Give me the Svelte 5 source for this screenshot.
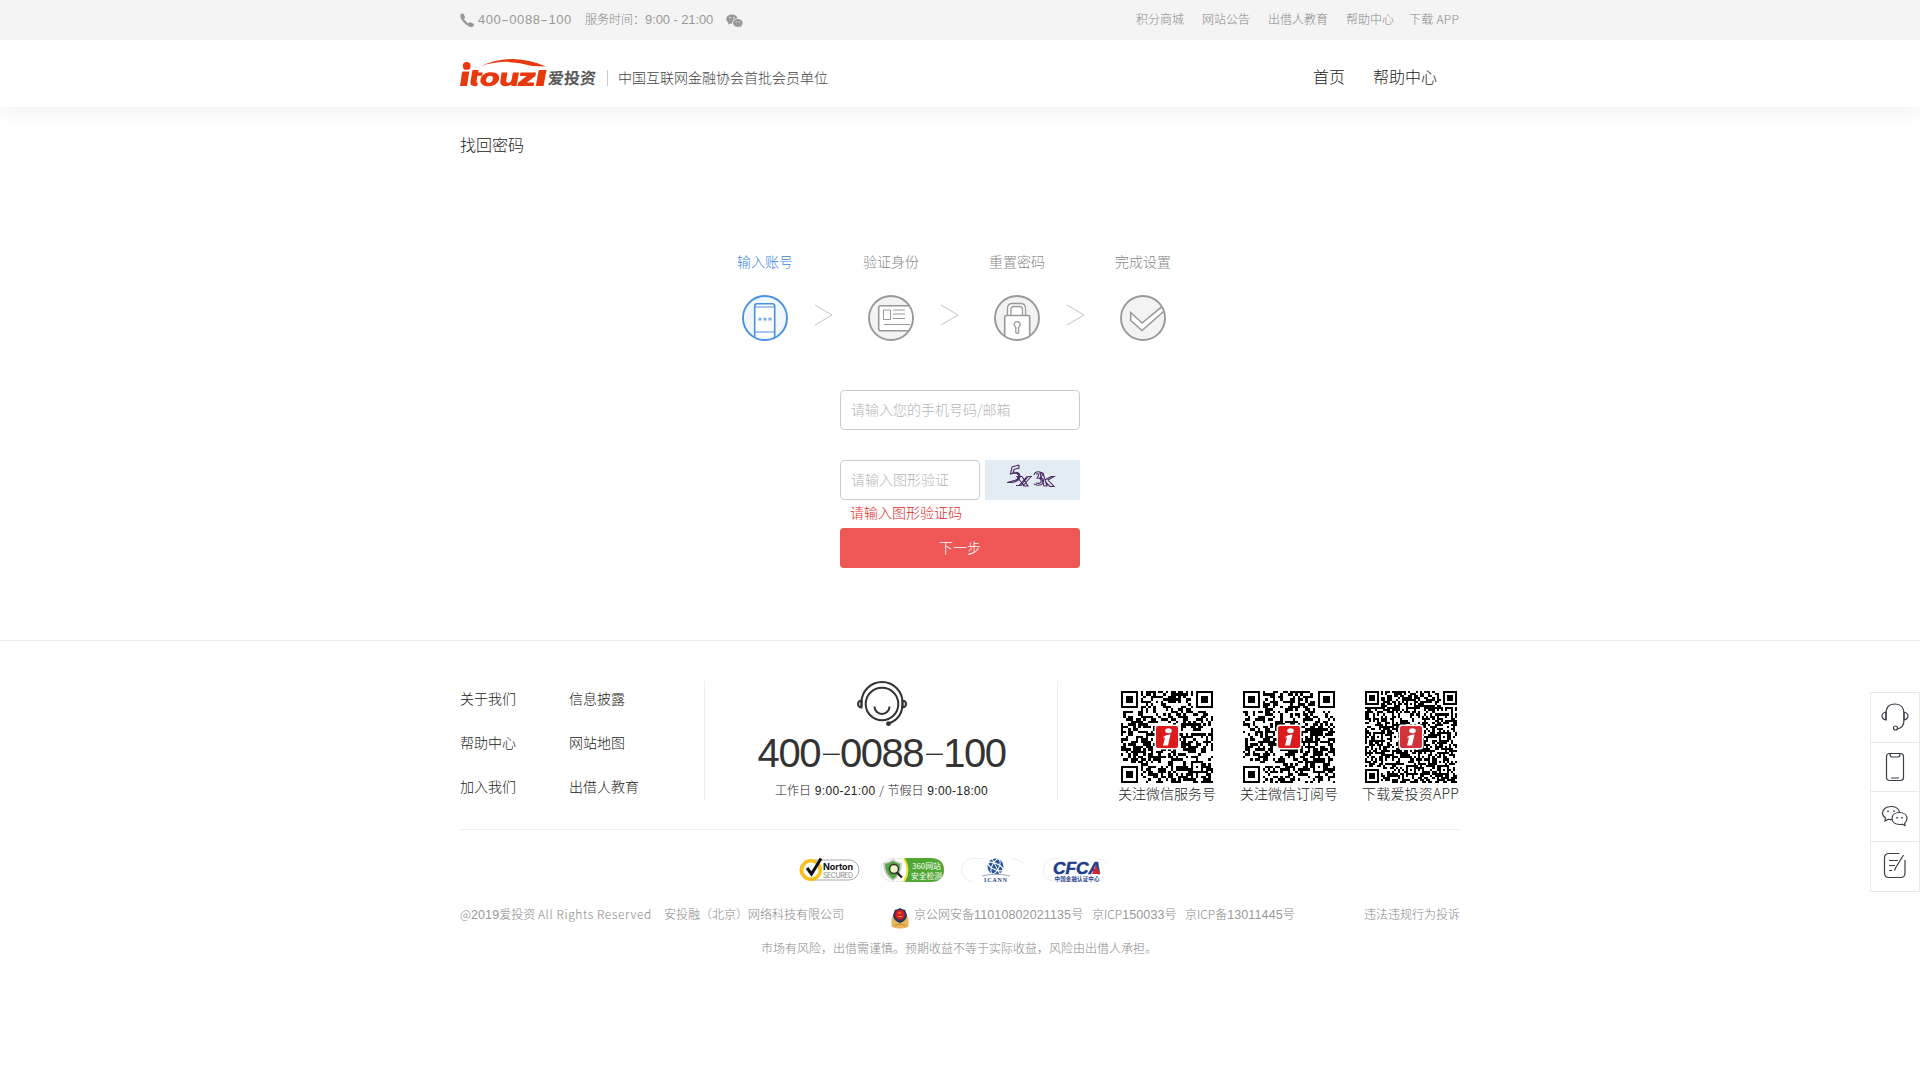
<script>
  const topLinks = ['积分商城', '网站公告', '出借人教育', '帮助中心', '下载 APP'];
  const steps = [
    { label: '输入账号', icon: 'phone' },
    { label: '验证身份', icon: 'card' },
    { label: '重置密码', icon: 'lock' },
    { label: '完成设置', icon: 'check' },
  ];
  const links = ['关于我们', '信息披露', '帮助中心', '网站地图', '加入我们', '出借人教育'];

  // Builds the dark modules of a QR-style symbol as one path.
  function qr(n, seed, align) {
    let s = seed;
    const rand = () => {
      s = (s * 1664525 + 1013904223) % 4294967296;
      return s / 4294967296;
    };
    const grid = Array.from({ length: n }, () => Array.from({ length: n }, () => rand() < 0.52));
    const ring = (cx, cy, r, pad) => {
      for (let y = -r - pad; y <= r + pad; y++)
        for (let x = -r - pad; x <= r + pad; x++) {
          const yy = cy + y;
          const xx = cx + x;
          if (yy < 0 || xx < 0 || yy >= n || xx >= n) continue;
          const d = Math.max(Math.abs(x), Math.abs(y));
          grid[yy][xx] = r === 3 ? d === 3 || d <= 1 : d !== 1;
        }
    };
    for (const [x, y] of align) ring(x, y, 2, 0);
    ring(3, 3, 3, 1);
    ring(n - 4, 3, 3, 1);
    ring(3, n - 4, 3, 1);
    let d = '';
    grid.forEach((row, y) => row.forEach((on, x) => {
      if (on) d += `M${x} ${y}h1v1h-1z`;
    }));
    return d;
  }
  const codes = [
    { label: '关注微信服务号', n: 37, d: qr(37, 17, [[30, 30]]) },
    { label: '关注微信订阅号', n: 37, d: qr(37, 923, [[30, 30]]) },
    { label: '下载爱投资APP', n: 45, d: qr(45, 4411, [[38, 38], [22, 6], [6, 22], [38, 22], [22, 38]]) },
  ];
</script>

<div class="page">
  <div class="topbar">
    <div class="wrap">
      <svg class="tel" width="15" height="15" viewBox="0 0 15 15"><path d="M.6 1.6Q2-.1 3.500 .8L5 4Q5.300 4.800 4 5.800Q5.200 8.800 8.300 10.600Q9.400 9 10.300 9.300L13.800 11Q14.500 12 13 13.600Q10.500 15.300 6 11.500Q-1 5.600 .6 1.600Z" fill="#999" /></svg>
      <span class="num">400<i>-</i>0088<i>-</i>100</span>
      <span class="time">服务时间：<b>9:00 - 21:00</b></span>
      <svg class="wx" width="17" height="14" viewBox="0 0 17 14"><path d="M6 .5C2.800 .5.300 2.500.300 5.100c0 1.500.8 2.700 2 3.500L1.800 10.700 4 9.500q1 .3 2.300.2C6 6.500 8.300 4.300 11.600 4.200 11 2 8.800.5 6 .5Z" fill="#999" /><path d="M11.700 5C9.200 5 7.100 6.700 7.100 8.900s2.100 4 4.600 4q1 0 1.800-.3l1.900 1-.5-1.700c1-.7 1.700-1.800 1.700-3C16.600 6.700 14.300 5 11.700 5Z" fill="#999" /><g fill="#f4f4f4"><circle cx="4" cy="3.800" r=".8" /><circle cx="7.800" cy="3.800" r=".8" /><circle cx="10.200" cy="7.900" r=".7" /><circle cx="13.300" cy="7.900" r=".7" /></g></svg>
      <nav>{#each topLinks as t}<a>{t}</a>{/each}</nav>
    </div>
  </div>

  <header>
    <div class="wrap">
      <svg class="logo" width="87" height="28" viewBox="0 0 87 28">
        <g fill="#e8380d">
          <circle cx="6.700" cy="6.900" r="3.900" />
          <path d="M20 7.500Q35 .2 53 0Q71 .5 86 7.500L72 7Q46-1.500 20 7.500Z" />
          <path d="M2.500 12.500H9.300L7 27H0L1.500 16.500Q1.700 14 2.500 12.500Z" />
          <path d="M12.500 11h6l-.4 2.500h4.700l-.8 3.300h-4.500l-1 5.500q-.2 1.600 1.500 1.500L17 27q-7.500 1-6.500-4.500Z" />
          <path fill-rule="evenodd" d="M31 13.200c6 0 9 2.800 8 7s-5 7-10.500 7-9-2.700-8-7 5-7 10.500-7Zm-.8 3.500c-2.300 0-3.500 1.500-4 3.700s.3 3.300 2.600 3.300 3.500-1.200 4-3.300-.3-3.700-2.600-3.700Z" />
          <path d="M41.500 13.500h6l-1.300 7.500q-.5 2.800 2 2.800 2.700 0 3.400-3l1.300-7.300H59L56.500 27h-5.200l.3-1.500q-8 3.500-10.800-.3-.8-1.200-.3-3.500Z" />
          <path d="M60.500 13.500H76l-.6 3.400-8.500 6.500h7.400l-.7 3.600H57.500l.6-3.300 8.500-6.800h-6.700Z" />
          <path d="M78.800 11H86.500L83.500 27h-7.700Z" />
        </g>
      </svg>
      <strong>爱投资</strong>
      <span class="slogan">中国互联网金融协会首批会员单位</span>
      <nav><a>首页</a><a>帮助中心</a></nav>
    </div>
  </header>

  <main class="wrap">
    <h1>找回密码</h1>
    <ol>
      {#each steps as step, i}
        <li class:active={i === 0}>
          <span>{step.label}</span>
          <svg width="46" height="46" viewBox="0 0 46 46" fill="none" stroke="currentColor">
            <defs><clipPath id="disc{i}"><circle cx="23" cy="23" r="22" /></clipPath></defs>
            <circle class="disc" cx="23" cy="23" r="22" stroke="none" />
            <g clip-path="url(#disc{i})">
              {#if step.icon === 'phone'}
                <rect x="12.700" y="8.700" width="20" height="40" rx="2.500" fill="#fff" stroke-width="1.600" />
                <path d="M13 12h20M13 37h20" stroke-width="1" />
                <path d="M18 22v4.400M16 23.200l4 2M20 23.200l-4 2M23 22v4.400M21 23.200l4 2M25 23.200l-4 2M28 22v4.400M26 23.200l4 2M30 23.200l-4 2" stroke-width=".6" />
              {:else if step.icon === 'card'}
                <rect x="10.700" y="10.700" width="38" height="25" rx="2" fill="#fff" stroke-width="1.600" />
                <path d="M15.500 15h7v9.500h-7ZM25 15h12M25 19h12M25 23.500h12M16 29.500h26" stroke-width="1" />
              {:else if step.icon === 'lock'}
                <path d="M13.500 21V13.500q0-5 5-5h8q5 0 5 5V21M17 21V14.500q0-3 3-3h5.500q3 0 3 3V21" fill="#fff" stroke-width="1.300" />
                <rect x="10.700" y="20.500" width="25" height="30" rx="1.500" fill="#fff" stroke-width="1.600" />
                <path d="M21.800 37.500v-5.300a3 3 0 1 1 2.800 0v5.300q-1.400 1.500-2.800 0Z" stroke-width="1.300" />
              {:else}
                <path d="M10.700 17.500v8L22 35.500 47 13.500V7.500L22 28Z" fill="#fff" stroke-width="1.600" />
              {/if}
            </g>
            <circle cx="23" cy="23" r="22" stroke-width="1.900" />
          </svg>
          {#if i < 3}<svg class="next" width="20" height="22" viewBox="0 0 20 22" fill="none" stroke="#c4c4c4"><path d="M1 1l17 10L1 21" /></svg>{/if}
        </li>
      {/each}
    </ol>
    <form>
      <input placeholder="请输入您的手机号码/邮箱" />
      <div class="row">
        <input placeholder="请输入图形验证" />
        <svg class="captcha" width="95" height="40" viewBox="0 0 95 40" fill="none" stroke="#4b2a62" stroke-width="1.100">
          <rect width="95" height="40" fill="#e4ecf3" stroke="none" />
          <path d="M34 5l-7 2-1.500 7q6-2 8 1 1 5-6 6l-5 1.500M34 5v3l-5 1.500-1 3q6-1 7 3 0 6-8 7h-5" />
          <path d="M32 16.500h5l6 9.500h-4ZM31 25.500h5l7-9h4M34 25.500l8-9M46 16.500l-8 9.500" />
          <path d="M49 15q1-4 6-3 5 2 0 6 5 0 3 5-3 4-9 1M51 14q5-1 1 4 5 0 4 4-1 2-5 1" />
          <path d="M55 13l4 13h3L58 13ZM60 20l6-3.500h3L63 20l6 6.500h-4l-5-5" />
        </svg>
      </div>
      <p>请输入图形验证码</p>
      <button type="button">下一步</button>
    </form>
  </main>

  <footer>
    <div class="wrap">
      <div class="info">
        <div class="links">{#each links as l}<a>{l}</a>{/each}</div>
        <div class="service">
          <svg width="50" height="46" viewBox="0 0 50 46" fill="none" stroke="#333" stroke-width="2"><circle cx="25" cy="23" r="16.300" /><path d="M4.500 25V21.500A20.500 20.500 0 0 1 45.500 21.500Q46 37 32 42.500M17.500 25.500a7.500 7.500 0 0 0 15 0" /><path d="M4.500 19.500Q1 20 1 23t3.500 3.500ZM45.500 19.500q3.500.5 3.500 3.500t-3.500 3.500Z" /><circle cx="31.500" cy="42.700" r="1.400" fill="#333" /></svg>
          <div class="big">400<i>-</i>0088<i>-</i>100</div>
          <p>工作日 <b>9:00-21:00</b> / 节假日 <b>9:00-18:00</b></p>
        </div>
        <div class="codes">
          {#each codes as c, i}
            <figure>
              <svg width="92" height="92" viewBox="0 0 92 92">
                <g transform="scale({92 / c.n})" shape-rendering="crispEdges"><path d={c.d} /></g>
                <rect x="33.500" y="33.500" width="25" height="25" rx="3" fill="#fff" />
                <rect x="35" y="35" width="22" height="22" rx="2" fill={i === 2 ? '#d2323a' : '#dc1c1c'} />
                <ellipse cx="47.500" cy="39.800" rx="3.300" ry="2.500" fill="#fff" />
                <path d="M41.500 46.500q4-3.500 8-3l-2.500 11h-5l2-8Z" fill="#fff" />
              </svg>
              <figcaption>{c.label}</figcaption>
            </figure>
          {/each}
        </div>
      </div>

      <div class="badges">
        <svg width="66" height="26" viewBox="0 0 66 26"><rect x="3" y="3" width="59" height="20" rx="10" fill="#fff" stroke="#aaa" /><circle cx="14" cy="13" r="9.300" fill="#fff" stroke="#fcc21b" stroke-width="3.400" /><path d="M10 11l4.500 6L24 1.500" fill="none" stroke="#111" stroke-width="3" /><text x="26" y="12.500" class="norton" textLength="30">Norton</text><text x="26" y="20.500" class="secured" textLength="30">SECURED</text></svg>
        <svg width="66" height="26" viewBox="0 0 66 26"><rect x="2" y="1.500" width="62" height="23" rx="11.500" fill="#fff" stroke="#e8e8e8" /><path d="M25 1h28q12 1 12 12T53 25H25q7-12 0-24Z" fill="#50a733" /><path d="M25 1.500q7 11.500 0 23" fill="none" stroke="#f3df3a" stroke-width="2" /><path d="M4 6q6-1 10-4 4 3 9 4 0 13-9 18Q4 19 4 6Z" fill="#ccc" /><path d="M6 7q5-1 8-3 3 2 7 3 0 11-7 15Q6 17 6 7Z" fill="#58a548" /><circle cx="15" cy="12" r="4.500" fill="#eef3c4" stroke="#333" stroke-width="1.500" /><path d="M18 15.500l5 5" stroke="#222" stroke-width="2.200" /><text x="33" y="12" class="safe" textLength="29" lengthAdjust="spacingAndGlyphs">360网站</text><text x="32" y="21.500" class="safe" textLength="31" lengthAdjust="spacingAndGlyphs">安全检测</text></svg>
        <svg width="66" height="26" viewBox="0 0 66 26"><path d="M12 24.500a11.500 11.500 0 0 1 0-23H24M50 1.500q8 0 12 5" fill="none" stroke="#eee" /><circle cx="34.500" cy="9.500" r="8" fill="#29559b" /><g fill="none" stroke="#fff"><ellipse cx="34.500" cy="9.500" rx="3.500" ry="8" transform="rotate(25 34.500 9.500)" /><ellipse cx="34.500" cy="9.500" rx="8" ry="3" transform="rotate(25 34.500 9.500)" /><path d="M31 1.500l8 16" /></g><path d="M21 19q14-3.500 28 0" stroke="#9ab" fill="none" /><text x="23" y="24.500" class="icann" textLength="23">ICANN</text></svg>
        <svg width="66" height="26" viewBox="0 0 66 26"><path d="M12 24.500a11.500 11.500 0 0 1 0-23H16M52 1.500q8 0 12 5" fill="none" stroke="#eee" /><text x="10" y="16.500" class="cfca" textLength="48" lengthAdjust="spacingAndGlyphs">CFCA</text><path d="M53 8l-4 9h8Z" fill="#d8232a" /><text x="11.500" y="23.500" class="cert" textLength="45">中国金融认证中心</text></svg>
      </div>

      <div class="legal">
        <span class="copy">@<b>2019</b>爱投资 <em>All Rights Reserved</em></span>
        <span class="company">安投融（北京）网络科技有限公司</span>
        <svg width="18" height="21" viewBox="0 0 18 21"><path d="M1.500 8Q-.5 15 1 19q8 3 16 0 1.500-4-.5-11Z" fill="#e8b45c" /><path d="M9 0q2 1.500 5 1.800L16 7q-.5 6-7 8-6.500-2-7-8L4 1.800Q7 1.500 9 0Z" fill="#25345e" /><circle cx="9" cy="6.800" r="4.900" fill="#d81e1e" /><path d="M7 5.500q2-2 3 0M7 8.500h4" stroke="#f4a04a" fill="none" /><path d="M3.500 17.500l5.500-1.500 5.500 1.500" fill="none" stroke="#c98535" /></svg>
        <span class="police">京公网安备<b>11010802021135</b>号</span>
        <span class="icp">京ICP<b>150033</b>号</span>
        <span>京ICP备<b>13011445</b>号</span>
        <a>违法违规行为投诉</a>
      </div>
      <p class="risk">市场有风险，出借需谨慎。预期收益不等于实际收益，风险由出借人承担。</p>
    </div>
  </footer>

  <aside>
    <div><svg width="30" height="30" viewBox="0 0 30 30"><path d="M6 18V12Q6 2 15 2t9 10v6M24 18q0 8-7 9" /><path d="M6 10q-4 1-4 4t4 4ZM24 10q4 1 4 4t-4 4Z" /><circle cx="15.500" cy="26" r="2" /></svg></div>
    <div><svg width="30" height="30" viewBox="0 0 30 30"><rect x="6.500" y="1.500" width="17" height="27" rx="3" /><path d="M10 2q0 3 2 3h6q2 0 2-3M11 26h8" /></svg></div>
    <div><svg width="30" height="30" viewBox="0 0 30 30"><path d="M12 18.500q-1.500.3-3.500-.3L5 20l.5-3Q2.500 15 2.500 12C2.500 8 6.500 5.500 11 5.500c4 0 7.500 2 8.500 5.500" /><path d="M19.500 11.500c-4.500 0-7.500 2.500-7.500 6s3 6 7.500 6q1.500 0 2.500-.3l3 1.300-.3-2.300Q27 20.500 27 17.500c0-3.500-3-6-7.500-6Z" /><path d="M8 9.500v1.500M14 9.500v1.500M17 16v1.500M22 16v1.500" stroke-width="1.600" /></svg></div>
    <div><svg width="30" height="30" viewBox="0 0 30 30"><path d="M19.500 2.500H9q-4.500 0-4.500 4.500V22q0 4.500 4.500 4.500H20.500q4.500 0 4.500-4.500V9M9 9.500h9M9 14.500h6M9 19.500h3M23.500 4l-8 13-1 2.500" /></svg></div>
  </aside>
</div>

<style>
  :global(body) { margin: 0; background: #fff; }
  .page { height: 1080px; font: 300 14px/20px "Noto Sans CJK SC", sans-serif; color: #222; overflow: hidden; position: relative; }
  .wrap { width: 1000px; margin: 0 auto; }
  svg { display: block; flex: none; }
  b { font-family: "Liberation Sans", sans-serif; font-weight: 400; }
  i { font-style: normal; }
  .topbar { position: relative; z-index: 1; height: 40px; background: #f4f4f4; color: #888; font-size: 12px; }
  .topbar .wrap { display: flex; align-items: center; height: 40px; white-space: nowrap; }
  .tel { margin-top: 1px; }
  .num { font: 13px/20px "Liberation Sans", sans-serif; color: #999; width: 110px; padding-left: 3px; box-sizing: border-box; letter-spacing: .55px; }
  .num i { display: inline-block; width: 8px; letter-spacing: 0; text-align: center; transform: scaleX(1.700); }
  .time { width: 141px; margin-top: -1px; }
  .time b { color: #999; font-size: 13px; letter-spacing: -.1px; }
  .wx { margin-top: 1px; }
  .topbar nav { margin: -2px 1px 0 auto; display: flex; gap: 18px; }
  .topbar nav a:last-child { margin-left: -3px; letter-spacing: .25px; }
  header { height: 67px; background: #fff; box-shadow: 0 4px 20px rgba(0, 0, 0, .06); }
  header .wrap { display: flex; align-items: flex-start; }
  .logo { margin-top: 19px; }
  strong { font: 700 16px/20px "Noto Sans CJK SC", sans-serif; color: #595757; transform: skewX(-5deg); margin: 27px 0 0 1px; width: 59px; white-space: nowrap; }
  .slogan { margin-top: 30px; border-left: 1px solid #ccc; padding-left: 10px; line-height: 14px; height: 16px; color: #444; }
  header nav { display: flex; gap: 28px; font-size: 16px; margin: 26px 23px 0 auto; }
  h1 { font-size: 16px; font-weight: 300; margin: 0; padding-top: 27px; line-height: 20px; }
  ol { list-style: none; display: flex; margin: 97px 0 0 277px; padding: 0; color: #999; }
  li { width: 126px; height: 90px; display: grid; grid-template-columns: 56px 70px; grid-template-rows: 44px 46px; }
  li span { grid-column: 1 / 3; color: #888; }
  li > svg { margin-left: 5px; }
  li .next { margin: 9px 0 0 21px; }
  .disc { fill: #f3f3f3; }
  .active { color: #4a90e2; }
  .active span { color: #3a86e0; }
  .active .disc { fill: #f1f7ff; }
  form { width: 240px; margin: 49px auto 0; }
  input { display: block; box-sizing: border-box; width: 240px; height: 40px; border: 1px solid #ccc; border-radius: 4px; padding: 0 10px 2px; font: inherit; background: #fff; }
  input::placeholder { color: #b5b5b5; opacity: 1; }
  .row { display: flex; gap: 5px; margin-top: 30px; }
  .row input { width: 140px; }
  form p { margin: 0; padding: 2px 0 6px 10px; color: #de2828; }
  button { display: block; width: 240px; height: 40px; border: 0; border-radius: 4px; background: #ef5656; color: #fff; font: inherit; padding: 0 0 2px; }
  footer { margin-top: 72px; border-top: 1px solid #eee; }
  .info { display: flex; margin-top: 40px; height: 148px; border-bottom: 1px solid #eee; }
  .links { width: 245px; height: 113px; border-right: 1px solid #eee; display: grid; grid-template-columns: 109px 1fr; grid-auto-rows: 44px; padding-top: 7px; }
  .service { width: 352px; height: 120px; border-right: 1px solid #eee; padding-left: 1px; display: flex; flex-direction: column; align-items: center; }
  .big { color: #333; font: 40px/40px "Liberation Sans", sans-serif; letter-spacing: -1.450px; margin-top: 6px; white-space: nowrap; }
  .big i { display: inline-block; width: 20px; text-align: center; font-family: "Noto Sans CJK SC"; font-weight: 100; line-height: 30px; transform: translateY(-2px) scaleX(1.750); }
  .service p { margin: 7px 0 0; font-size: 12px; white-space: nowrap; word-spacing: 1px; }
  .service b { font-size: 12px; letter-spacing: .35px; }
  .codes { display: flex; gap: 24px; margin: 10px 0 0 60px; }
  figure { width: 98px; margin: 0; }
  figure svg { margin-left: 3px; }
  figcaption { white-space: nowrap; }
  figure:last-child figcaption { letter-spacing: .2px; }
  .badges { display: flex; gap: 16px; margin: 27px 0 0 337px; }
  .norton { font: 700 9px "Inter", sans-serif; fill: #111; }
  .secured { font: 7px "Inter", sans-serif; fill: #888; }
  .safe { font: 400 8px "Noto Sans CJK SC", sans-serif; fill: #fff; }
  .icann { font: 700 6px "Liberation Serif", serif; fill: #224488; }
  .cfca { font: italic 700 16px "Liberation Sans", sans-serif; fill: #1f3c8c; stroke: #1f3c8c; stroke-width: .5px; }
  .cert { font: 700 5.500px "Noto Sans CJK SC", sans-serif; fill: #1f3c8c; }
  .legal { display: flex; margin-top: 21px; height: 20px; font-size: 12px; color: #888; white-space: nowrap; }
  .legal b { color: #999; font-size: 12.500px; letter-spacing: .12px; }
  .legal svg { margin-top: 4px; }
  .copy { width: 204px; }
  .copy em { font-style: normal; letter-spacing: .63px; }
  .company { width: 227px; }
  .police { margin-left: 5px; width: 178px; }
  .icp { width: 93px; }
  .legal a { margin-left: auto; }
  .risk { margin: 14px 0 0 301px; font-size: 12px; color: #888; white-space: nowrap; }
  aside { position: absolute; right: 0; top: 692px; width: 50px; height: 200px; box-sizing: border-box; border: 1px solid #e8e8e8; background: #fff; }
  aside div { height: 48.500px; border-bottom: 1px solid #e8e8e8; display: flex; align-items: center; justify-content: center; }
  aside div:last-child { border: 0; }
  aside svg { fill: none; stroke: #3a3f48; stroke-width: 1.200; margin: 0; }
</style>
